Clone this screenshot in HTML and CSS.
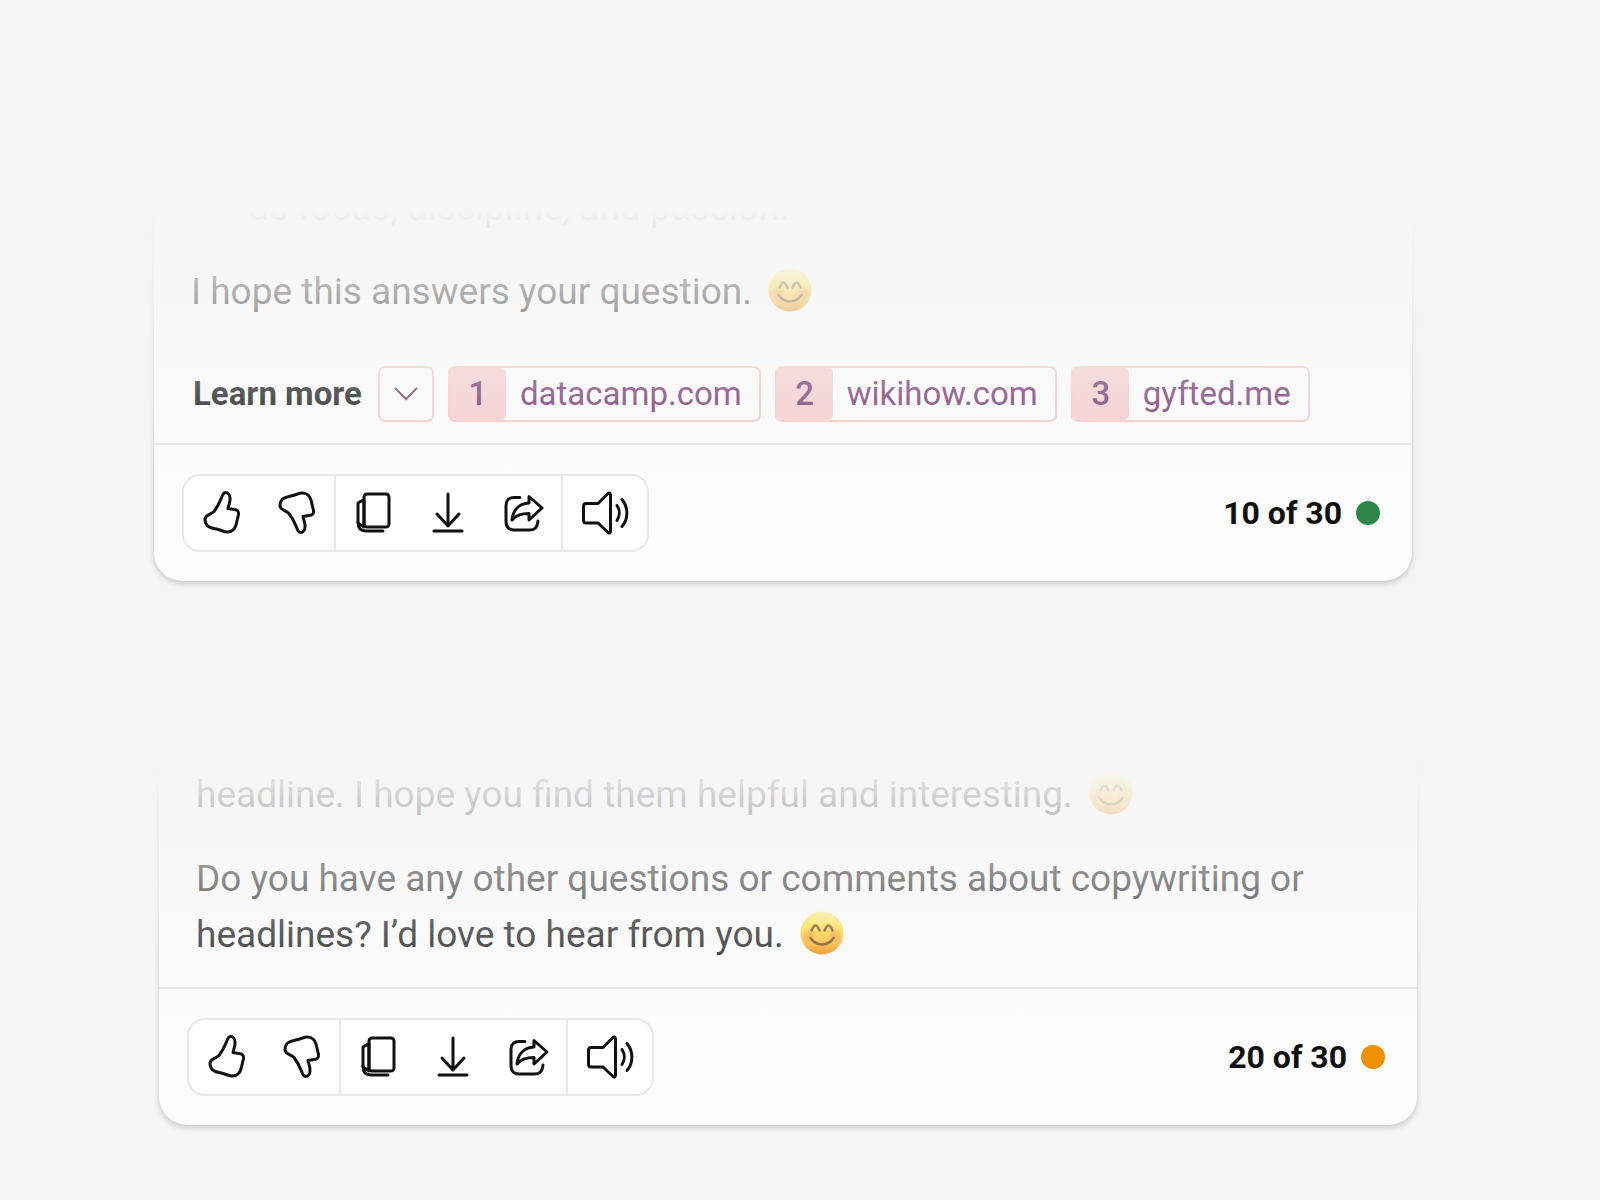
FILE: index.html
```html
<!DOCTYPE html>
<html lang="en">
<head>
  <meta charset="utf-8">
  <title>Chat Responses</title>
  <link rel="stylesheet" href="styles.css">
</head>
<body>
  <!-- Shared icons -->
  <svg class="sprite" aria-hidden="true">
    <defs>
      <linearGradient id="faceFill" x1="0" y1="0" x2="0" y2="1">
        <stop offset="0" stop-color="#fff08a"/>
        <stop offset="0.35" stop-color="#ffdd33"/>
        <stop offset="0.7" stop-color="#ffb81c"/>
        <stop offset="1" stop-color="#ee8208"/>
      </linearGradient>
      <radialGradient id="cheek">
        <stop offset="0" stop-color="#f5701c" stop-opacity="0.6"/>
        <stop offset="1" stop-color="#f5701c" stop-opacity="0"/>
      </radialGradient>
    </defs>
    <symbol id="smile" viewBox="0 0 44 44">
      <circle cx="22" cy="22" r="21.5" fill="url(#faceFill)"/>
      <circle cx="9" cy="25" r="8" fill="url(#cheek)"/>
      <circle cx="35" cy="25" r="8" fill="url(#cheek)"/>
      <path d="M11.500 19.500C13 16 14 14.500 15.500 14.500S18 16 19.500 19.500M24.500 19.500C26 16 27 14.500 28.500 14.500S31 16 32.500 19.500" fill="none" stroke="#6a3e10" stroke-width="2.500" stroke-linecap="round"/>
      <path d="M10.500 27C16 35.500 28 35.500 33.500 27" fill="none" stroke="#6a3e10" stroke-width="2.500" stroke-linecap="round"/>
    </symbol>
    <symbol id="thumb-up" viewBox="0 0 44 44">
      <path d="M25.500 1.500C23.500 1.500 22.500 4 21 8C19 13 17 16.500 14 20.500C11 23.500 5.500 23.500 5 28C5 31 6 34 8.500 35.500C11 37.500 14 37.500 18 38.500C22 39.500 24 41 27.500 41C32 41 35 37.500 36 34L38.500 23.500C39 20 37 18.500 34 18.500L28 17.500C29 13 30.500 10 30 7C30 4 28 1.500 25.500 1.500Z"/>
    </symbol>
    <symbol id="thumb-down" viewBox="0 0 44 44">
      <path transform="translate(0 43) scale(1 -1)" d="M25.500 1.500C23.500 1.500 22.500 4 21 8C19 13 17 16.500 14 20.500C11 23.500 5.500 23.500 5 28C5 31 6 34 8.500 35.500C11 37.500 14 37.500 18 38.500C22 39.500 24 41 27.500 41C32 41 35 37.500 36 34L38.500 23.500C39 20 37 18.500 34 18.500L28 17.500C29 13 30.500 10 30 7C30 4 28 1.500 25.500 1.500Z"/>
    </symbol>
    <symbol id="copy" viewBox="0 0 44 44">
      <path class="shade" d="M12 8.500L6 12V32L12 36Z"/>
      <path d="M6 31C6 37 9 40 14 40H31"/>
      <rect x="12" y="3" width="25" height="33" rx="3"/>
    </symbol>
    <symbol id="download" viewBox="0 0 44 44">
      <path d="M21 3V35M10 23L21 35L32 23M7 40H35"/>
    </symbol>
    <symbol id="share" viewBox="0 0 44 44">
      <path d="M18 6.500H12C7 6.500 4 9.500 4 14V31C4 36 7 39 12 39H28C33 39 35.500 36 36 30"/>
      <path d="M27 5.500L40 17L27 29V22.500C19 22.500 14 24 10 29C11 19 17 12.500 27 12Z"/>
    </symbol>
    <symbol id="speaker" viewBox="0 0 48 48">
      <path d="M5 14.500H17L27 4.500C28 3.500 29.500 4 29.500 6V42C29.500 44 28 44.500 27 43.500L17 34H5C3.500 34 2.500 33 2.500 31V17.500C2.500 15.500 3.500 14.500 5 14.500ZM36 16.500C39 21 39 27 36 31.500M41 10.500C47.500 18 47.500 30 41 37.500"/>
    </symbol>
  </svg>

  <main class="page">
    <!-- Response with sources -->
    <article class="card card-first">
      <div class="card-body">
        <ul class="answer-list">
          <li>as focus, discipline, and passion.</li>
        </ul>
        <p>I hope this answers your question. <svg class="emoji" role="img" aria-label="smiling face"><use href="#smile"/></svg></p>
        <div class="sources">
          <strong class="sources-label">Learn more</strong>
          <button class="expand" aria-label="Show all sources">
            <svg viewBox="0 0 24 14"><path d="M1 1L12 12L23 1"/></svg>
          </button>
          <a class="source" href="#"><span class="source-num">1</span><span class="source-name">datacamp.com</span></a>
          <a class="source" href="#"><span class="source-num">2</span><span class="source-name">wikihow.com</span></a>
          <a class="source" href="#"><span class="source-num">3</span><span class="source-name">gyfted.me</span></a>
        </div>
      </div>
      <footer class="card-footer">
        <div class="toolbar">
          <div class="group">
            <button aria-label="Like"><svg><use href="#thumb-up"/></svg></button>
            <button aria-label="Dislike"><svg><use href="#thumb-down"/></svg></button>
          </div>
          <div class="group">
            <button aria-label="Copy"><svg><use href="#copy"/></svg></button>
            <button aria-label="Download"><svg><use href="#download"/></svg></button>
            <button aria-label="Share"><svg><use href="#share"/></svg></button>
          </div>
          <div class="group">
            <button class="wide" aria-label="Read aloud"><svg><use href="#speaker"/></svg></button>
          </div>
        </div>
        <div class="counter">10 of 30 <span class="dot green"></span></div>
      </footer>
    </article>

    <!-- Response without sources -->
    <article class="card card-second">
      <div class="card-body">
        <p>headline. I hope you find them helpful and interesting. <svg class="emoji" role="img" aria-label="smiling face"><use href="#smile"/></svg></p>
        <p>Do you have any other questions or comments about copywriting or headlines? I’d love to hear from you. <svg class="emoji" role="img" aria-label="smiling face"><use href="#smile"/></svg></p>
      </div>
      <footer class="card-footer">
        <div class="toolbar">
          <div class="group">
            <button aria-label="Like"><svg><use href="#thumb-up"/></svg></button>
            <button aria-label="Dislike"><svg><use href="#thumb-down"/></svg></button>
          </div>
          <div class="group">
            <button aria-label="Copy"><svg><use href="#copy"/></svg></button>
            <button aria-label="Download"><svg><use href="#download"/></svg></button>
            <button aria-label="Share"><svg><use href="#share"/></svg></button>
          </div>
          <div class="group">
            <button class="wide" aria-label="Read aloud"><svg><use href="#speaker"/></svg></button>
          </div>
        </div>
        <div class="counter">20 of 30 <span class="dot orange"></span></div>
      </footer>
    </article>
  </main>
</body>
</html>
```
FILE: styles.css
```css
* {
  box-sizing: border-box;
}
body {
  margin: 0;
  background-color: #f5f5f5;
  color: #111111;
  font-family: Roboto, "Liberation Sans", sans-serif;
}
.sprite {
  position: absolute;
  width: 0;
  height: 0;
}
.page {
  display: flex;
  flex-direction: column;
  gap: 174px;
  padding: 211px 183px 60px 154px;
}
.card {
  position: relative;
  background-color: #fcfcfc;
  border-radius: 0 0 28px 28px;
  box-shadow: 0 3px 6px rgba(0, 0, 0, 0.16), 0 0 2px rgba(0, 0, 0, 0.1);
}
.card-first {
  margin-right: 5px;
}
.card-second {
  margin-left: 5px;
}
/* Fades older text into the page background */
.card::before {
  content: "";
  position: absolute;
  z-index: 1;
  top: -12px;
  left: -12px;
  right: -12px;
  height: 276px;
  background: linear-gradient(#f5f5f5 12px, rgba(245, 245, 245, 0));
  pointer-events: none;
}
.card-body {
  display: flex;
  flex-direction: column;
  justify-content: flex-end;
  height: 232px;
  padding: 0 37px 24px;
  overflow: hidden;
  font-size: 37px;
  line-height: 56px;
}
.card-first .card-body {
  padding-bottom: 21px;
}
.card-body p {
  margin: 28px 0 0;
}
.answer-list {
  margin: 0;
  padding-left: 58px;
  list-style: none;
}
.emoji {
  width: 44px;
  height: 44px;
  margin-left: 7px;
  vertical-align: -8px;
}

/* Sources */
.sources {
  display: flex;
  align-items: center;
  gap: 14px;
  margin-top: 46px;
  font-size: 33px;
}
.sources-label {
  margin-right: 2px;
  padding-left: 2px;
}
.expand {
  display: flex;
  align-items: center;
  justify-content: center;
  width: 56px;
  height: 56px;
  padding: 0;
  border: 2px solid #fac8c8;
  border-radius: 7px;
  background: none;
}
.expand svg {
  width: 24px;
  height: 14px;
  fill: none;
  stroke: #712c6e;
  stroke-width: 2;
}
.source {
  display: flex;
  height: 56px;
  border: 2px solid #fac8c8;
  border-radius: 7px;
  color: #712c6e;
  line-height: 52px;
  text-decoration: none;
}
.source-num {
  width: 56px;
  background-color: #f6cccc;
  border-radius: 0 5px 5px 0;
  font-weight: 500;
  text-align: center;
}
.source-name {
  padding: 0 17px 0 14px;
}

/* Footer */
.card-footer {
  display: flex;
  align-items: center;
  justify-content: space-between;
  padding: 29px 32px 29px 28px;
  border-top: 2px solid #e6e6e6;
}
.toolbar {
  display: flex;
  height: 78px;
  border: 2px solid #e8e8e8;
  border-radius: 18px;
  background-color: #ffffff;
}
.group {
  display: flex;
}
.group + .group {
  border-left: 2px solid #e8e8e8;
}
.group button {
  display: flex;
  align-items: center;
  justify-content: center;
  width: 75px;
  padding: 0;
  border: none;
  background: none;
}
.group svg {
  width: 44px;
  height: 44px;
  fill: none;
  stroke: #111111;
  stroke-width: 3px;
  stroke-linecap: round;
  stroke-linejoin: round;
}
.group .wide {
  width: 84px;
}
.group .wide svg {
  width: 48px;
  height: 48px;
}
.group .shade {
  fill: #999999;
  stroke: #777777;
  stroke-width: 1px;
}
.counter {
  display: flex;
  align-items: center;
  gap: 14px;
  font-size: 32px;
  font-weight: bold;
}
.dot {
  width: 24px;
  height: 24px;
  border-radius: 50%;
}
.green {
  background-color: #2b8748;
}
.orange {
  background-color: #f09000;
}
```
